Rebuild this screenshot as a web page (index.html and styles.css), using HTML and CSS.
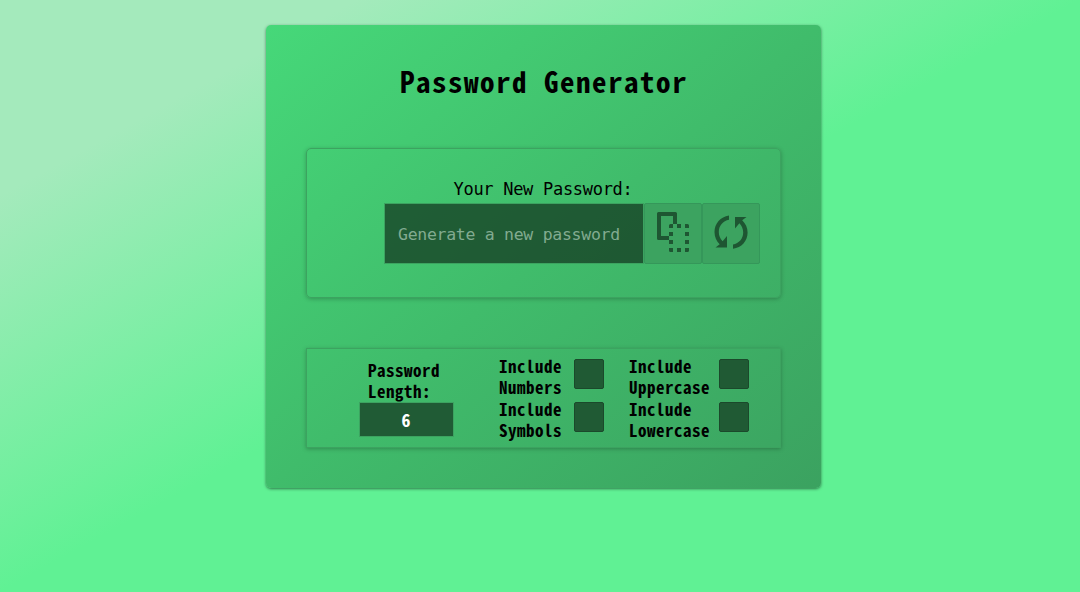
FILE: index.html
```html
<!DOCTYPE html>
<html lang="en">
<head>
<meta charset="utf-8">
<title>Password Generator</title>
<link rel="stylesheet" href="styles.css">
</head>
<body>
<main class="card">
  <h1 class="title">Password Generator</h1>
  <section class="panel result">
    <label class="result-label" for="password">Your New Password:</label>
    <div class="result-row">
      <input class="password" id="password" type="text" placeholder="Generate a new password" readonly>
      <button class="tool" type="button" aria-label="Copy">
        <svg width="56" height="58" viewBox="645 205 56 58">
          <path d="M657 213.500a1.500 1.500 0 0 1 1.500-1.500h17a1.500 1.500 0 0 1 1.500 1.500v10.500h-4v-8h-12v20h8v4h-10.500a1.500 1.500 0 0 1-1.500-1.500z"/>
          <path d="M669 228v-2.500a1.500 1.500 0 0 1 1.500-1.500h2.500v4zM677 224h4v4h-4zM685 224h2.500a1.500 1.500 0 0 1 1.500 1.500v2.500h-4zM669 232h4v4h-4zM685 232h4v4h-4zM669 240h4v4h-4zM685 240h4v4h-4zM669 248h4v4h-2.500a1.500 1.500 0 0 1-1.500-1.500zM677 248h4v4h-4zM685 248h4v2.500a1.500 1.500 0 0 1-1.500 1.500h-2.500z"/>
        </svg>
      </button>
      <button class="tool" type="button" aria-label="Generate">
        <svg width="56" height="58" viewBox="703 205 56 58">
          <path d="M729 215.500v4.200c-6 1-10.200 6-10.200 12.300 0 3.700 1.400 6.800 3.800 9.300l4.400-5.300v11.500h-11.500l4.200-3.200c-3.300-3.300-5.200-7.500-5.200-12.300 0-8.500 6-15.200 14.500-16.500z"/>
          <path d="M735 217h11.500l-4.300 3.200c3.400 3.300 5.400 7.500 5.400 12.300 0 8.500-6 15.200-14.600 16.200v-4.200c6-1 10.200-5.900 10.200-12 0-3.700-1.400-6.800-3.800-9.300l-4.400 5.300z"/>
        </svg>
      </button>
    </div>
  </section>
  <section class="panel options">
    <div class="length">
      <label class="length-label" for="length">Password<br>Length:</label>
      <input class="length-input" id="length" type="text" value="6">
    </div>
    <div class="checks">
      <label for="numbers">Include<br>Numbers</label><span class="box" id="numbers"></span>
      <label class="second" for="uppercase">Include<br>Uppercase</label><span class="box" id="uppercase"></span>
      <label for="symbols">Include<br>Symbols</label><span class="box" id="symbols"></span>
      <label class="second" for="lowercase">Include<br>Lowercase</label><span class="box" id="lowercase"></span>
    </div>
  </section>
</main>
</body>
</html>
```
FILE: styles.css
```css
* {
  box-sizing: border-box;
}

body {
  margin: 0;
  height: 592px;
  padding: 25px 0 0 266px;
  overflow: hidden;
  background: linear-gradient(to bottom right, #a4eabc 16.5%, #60f194 50%);
  font-family: "DejaVu Sans Mono", monospace;
  color: #000;
}

.card {
  display: flex;
  flex-direction: column;
  width: 555px;
  height: 463px;
  padding: 0 40px;
  border-radius: 5px;
  background: linear-gradient(to bottom right, #46d879, #40bc6b 50%, #3ba260);
  box-shadow: 0 1px 3px rgba(0, 0, 0, 0.5);
}

.title {
  margin: 33px 0 0;
  padding-left: 1px;
  font-family: "Noto Sans Mono CJK SC", "DejaVu Sans Mono", monospace;
  font-size: 29px;
  letter-spacing: 1.500px;
  line-height: 44px;
  text-align: center;
  white-space: nowrap;
}

.panel {
  width: 475px;
  border: 1px solid #3ca360;
  box-shadow: 0 1px 4px rgba(0, 0, 0, 0.25);
}

.result {
  display: flex;
  flex-direction: column;
  height: 150px;
  margin-top: 46px;
  padding: 28px 0 0 77px;
  border-radius: 5px;
}

.result-label {
  width: 320px;
  padding-left: 69.500px;
  font-size: 17px;
  letter-spacing: -0.290px;
  line-height: 24px;
  white-space: nowrap;
}

.result-row {
  display: flex;
  margin-top: 2px;
}

.password {
  width: 260px;
  height: 61px;
  padding: 2px 0 0 13px;
  border: 1px solid #3ca360;
  background: rgba(20, 57, 33, 0.75);
  color: #fff;
  font: 16.500px "DejaVu Sans Mono", monospace;
  letter-spacing: -0.290px;
}

.password::placeholder {
  color: #82ab90;
}

.tool {
  width: 58px;
  height: 61px;
  padding: 0;
  border: 1px solid #35975a;
  border-radius: 2px;
  background: #3ca360;
}

.tool svg {
  display: block;
  fill: #1e5632;
}

.options {
  display: flex;
  height: 100px;
  margin-top: 50px;
  font-family: "Noto Sans Mono CJK SC", "DejaVu Sans Mono", monospace;
  font-size: 17px;
  letter-spacing: 0.500px;
  font-weight: 700;
  line-height: 21px;
}

.length {
  padding: 10px 0 0 52px;
}

.length-label {
  display: block;
  padding-left: 9px;
}

.length-input {
  display: block;
  width: 95px;
  height: 35px;
  margin-top: 1px;
  padding: 0 1px 2px 0;
  border: 1px solid #3ca360;
  background: #205b35;
  color: #fff;
  font: 700 18px "Noto Sans Mono CJK SC", "DejaVu Sans Mono", monospace;
  text-align: center;
}

.checks {
  display: grid;
  grid-template-columns: 75px 30px 115px 30px;
  grid-template-rows: 43px 43px;
  margin: 6px 0 0 45px;
}

.second {
  padding-left: 25px;
}

.box {
  width: 30px;
  height: 30px;
  margin-top: 4px;
  border: 1px solid #1b492b;
  border-radius: 2px;
  background: #205a34;
}
```
